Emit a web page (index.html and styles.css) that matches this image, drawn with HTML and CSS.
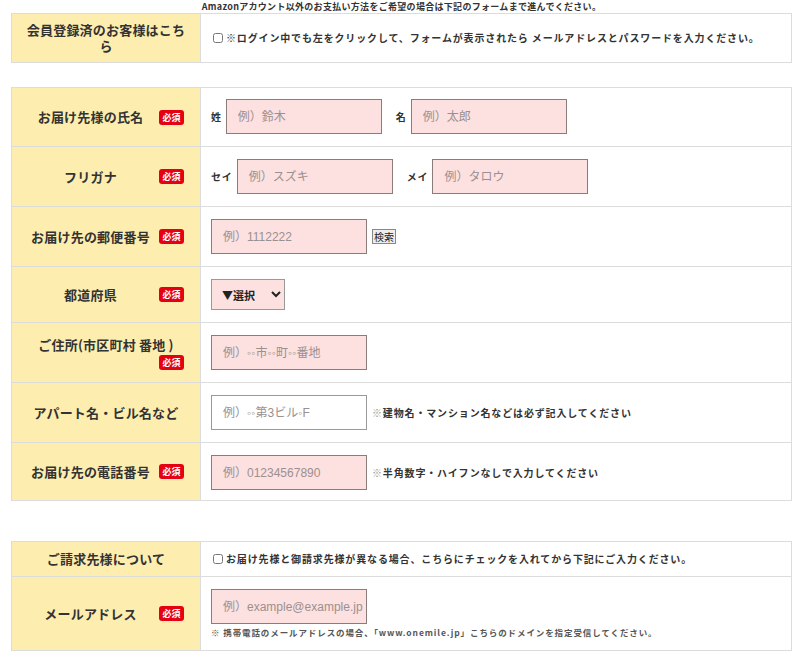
FILE: index.html
```html
<!DOCTYPE html>
<html lang="ja">
<head>
    <meta charset="UTF-8">
    <meta name="viewport" content="width=device-width, initial-scale=1.0">
    <title>お届け先情報の入力</title>
    <link rel="stylesheet" href="styles.css">
</head>
<body>
    <div class="page">
        <p class="lead">Amazonアカウント以外のお支払い方法をご希望の場合は下記のフォームまで進んでください。</p>

        <table class="form-table login">
            <tr>
                <th>会員登録済のお客様はこちら</th>
                <td class="short"><label class="check"><input type="checkbox">※ログイン中でも左をクリックして、フォームが表示されたら メールアドレスとパスワードを入力ください。</label></td>
            </tr>
        </table>

        <table class="form-table shipping">
            <tr class="first">
                <th><div class="label"><span class="label-text">お届け先様の氏名</span><span class="req">必須</span></div></th>
                <td><div class="field"><span class="prefix">姓</span><input class="text" placeholder="例）鈴木"><span class="prefix next">名</span><input class="text" placeholder="例）太郎"></div></td>
            </tr>
            <tr>
                <th><div class="label"><span class="label-text">フリガナ</span><span class="req">必須</span></div></th>
                <td><div class="field"><span class="prefix">セイ</span><input class="text" placeholder="例）スズキ"><span class="prefix next">メイ</span><input class="text" placeholder="例）タロウ"></div></td>
            </tr>
            <tr>
                <th><div class="label"><span class="label-text">お届け先の郵便番号</span><span class="req">必須</span></div></th>
                <td><div class="field"><input class="text" placeholder="例）1112222"><button class="search" type="button">検索</button></div></td>
            </tr>
            <tr>
                <th><div class="label"><span class="label-text">都道府県</span><span class="req">必須</span></div></th>
                <td><div class="field">
                    <select class="pref">
                        <option>▼選択</option>
                        <option>北海道</option>
                        <option>東京都</option>
                        <option>大阪府</option>
                    </select>
                </div></td>
            </tr>
            <tr>
                <th><div class="label-text">ご住所(市区町村 番地 )</div><div class="req-row"><span class="req">必須</span></div></th>
                <td><div class="field"><input class="text" placeholder="例）◦◦市◦◦町◦◦番地"></div></td>
            </tr>
            <tr>
                <th><div class="label-text">アパート名・ビル名など</div></th>
                <td><div class="field"><input class="text plain" placeholder="例）◦◦第3ビル◦F"><span class="hint"><span class="mark">※</span>建物名・マンション名などは必ず記入してください</span></div></td>
            </tr>
            <tr class="last">
                <th><div class="label"><span class="label-text">お届け先の電話番号</span><span class="req">必須</span></div></th>
                <td><div class="field"><input class="text" placeholder="例）01234567890"><span class="hint"><span class="mark">※</span>半角数字・ハイフンなしで入力してください</span></div></td>
            </tr>
        </table>

        <table class="form-table billing">
            <tr>
                <th>ご請求先様について</th>
                <td class="short"><label class="check"><input type="checkbox">お届け先様と御請求先様が異なる場合、こちらにチェックを入れてから下記にご入力ください。</label></td>
            </tr>
            <tr>
                <th><div class="label"><span class="label-text">メールアドレス</span><span class="req">必須</span></div></th>
                <td>
                    <input class="text" placeholder="例）example@example.jp">
                    <p class="note">※ 携帯電話のメールアドレスの場合、「www.onemile.jp」こちらのドメインを指定受信してください。</p>
                </td>
            </tr>
        </table>
    </div>
</body>
</html>
```

FILE: styles.css
```css
body {
    margin: 0;
    background-color: #fff;
    color: #333;
    font-family: "Noto Sans CJK JP", sans-serif;
}

.page {
    padding: 0 8px 20px 11px;
}

.lead {
    margin: 0;
    height: 13px;
    font-size: 9px;
    line-height: 13px;
    font-weight: bold;
    letter-spacing: 0.3px;
    text-align: center;
}

.form-table {
    width: 100%;
    border-collapse: collapse;
}

.login {
    margin-bottom: 24px;
}

.shipping {
    margin-bottom: 40px;
}

.form-table th {
    box-sizing: border-box;
    width: 189px;
    padding: 0 10px;
    border: 1px solid #dcdcdc;
    background-color: #fdeeb0;
    font-size: 13px;
    line-height: 16px;
    font-weight: bold;
    letter-spacing: 0.2px;
    text-align: center;
}

.login th {
    padding-top: 8px;
    padding-bottom: 8px;
}

.form-table td {
    padding: 12px 10px;
    border: 1px solid #dcdcdc;
    font-size: 10px;
    line-height: 12px;
    font-weight: bold;
    letter-spacing: 0.85px;
}

.form-table td.short {
    padding-top: 11px;
    padding-bottom: 11px;
    padding-left: 11px;
}

.shipping .first td {
    padding-top: 11px;
}

.shipping .last td {
    padding-bottom: 10px;
}

.label {
    display: flex;
    align-items: center;
    padding-right: 6px;
}

.label-text {
    flex: 1;
    text-align: center;
}

.req {
    display: inline-block;
    width: 25px;
    height: 15px;
    border-radius: 3px;
    background-color: #e50012;
    color: #fff;
    font-size: 9px;
    line-height: 15px;
    letter-spacing: 0;
    text-align: center;
}

.req-row {
    height: 15px;
    padding-right: 6px;
    text-align: right;
}

.check input {
    width: 10px;
    height: 10px;
    margin: 0 3px 0 1px;
    vertical-align: -1px;
}

.field {
    display: flex;
    align-items: center;
}

.prefix {
    margin-right: 4px;
}

.prefix.next {
    margin-left: 14px;
}

.text {
    box-sizing: border-box;
    width: 156px;
    height: 35px;
    margin: 0;
    padding: 0 2px 0 11px;
    border: 1px solid #8c7b7b;
    border-radius: 0;
    background-color: #fde0e0;
    color: #333;
    font-family: "Liberation Sans", "Noto Sans CJK JP", sans-serif;
    font-size: 12px;
    font-weight: normal;
    letter-spacing: 0;
}

.text::placeholder {
    color: #9a9090;
}

.text.plain {
    border-color: #9a9a9a;
    background-color: #fff;
}

.search {
    height: 15px;
    margin-left: 5px;
    padding: 0 1px;
    border: 1px solid #888;
    border-radius: 0;
    background-color: #eee;
    color: #222;
    font-family: "Noto Sans CJK JP", sans-serif;
    font-size: 10px;
    line-height: 13px;
    letter-spacing: 0;
}

.pref {
    box-sizing: border-box;
    width: 74px;
    height: 31px;
    padding: 0 4px 0 6px;
    border: 1px solid #999;
    border-radius: 0;
    background-color: #fde0e0;
    color: #222;
    font-family: "Noto Sans CJK JP", sans-serif;
    font-size: 11px;
    font-weight: bold;
}

.hint {
    margin-left: 5px;
}

.mark {
    color: #999;
}

.note {
    margin: 2px 0 0;
    color: #555;
    font-size: 8.5px;
    line-height: 12px;
    letter-spacing: 0.9px;
}
```
